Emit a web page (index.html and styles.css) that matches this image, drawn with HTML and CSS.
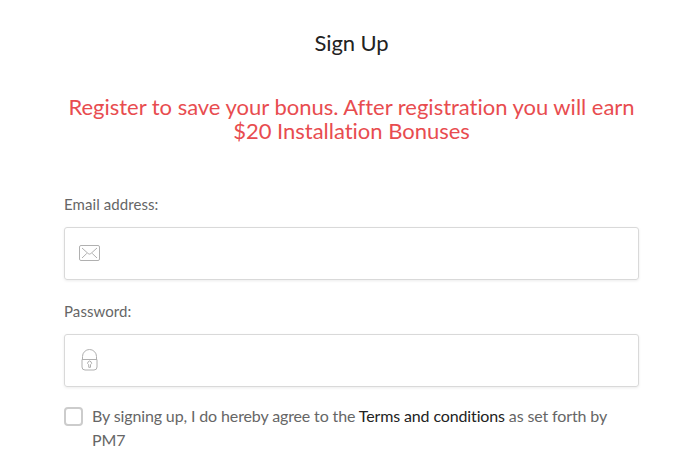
FILE: index.html
```html
<!DOCTYPE html>
<html lang="en">
<head>
    <meta charset="UTF-8">
    <meta name="viewport" content="width=device-width, initial-scale=1.0">
    <title>Sign Up</title>
    <link rel="stylesheet" href="styles.css">
</head>
<body>
<form class="signup">
    <h1 class="title">Sign Up</h1>
    <h2 class="bonus">Register to save your bonus. After registration you will earn $20 Installation Bonuses</h2>

    <div class="field">
        <label for="email">Email address:</label>
        <div class="input-box">
            <svg class="icon" width="22" height="22" viewBox="0 0 22 22">
                <rect x="0.5" y="3.5" width="20" height="15" rx="1.5"/>
                <path d="M3 6l6.2 5.6q1.3 1 2.6 0L18 6M3 16l4.8-4.6M18 16l-4.8-4.6"/>
            </svg>
            <input type="email" id="email">
        </div>
    </div>

    <div class="field">
        <label for="password">Password:</label>
        <div class="input-box">
            <svg class="icon" width="22" height="22" viewBox="0 0 22 22">
                <path d="M3.5 10.5V7.5a7 7 0 0 1 14 0v3"/>
                <path d="M3 10.5h15v7.5q0 3-3 3H6q-3 0-3-3z"/>
                <path d="M9.7 15.7a1.9 1.9 0 1 1 1.8 0v2.6H9.7z"/>
            </svg>
            <input type="password" id="password">
        </div>
    </div>

    <div class="terms">
        <input type="checkbox" id="agree" class="checkbox">
        <label for="agree">By signing up, I do hereby agree to the <a href="#">Terms and conditions</a> as set forth by PM7</label>
    </div>
</form>
</body>
</html>
```

FILE: styles.css
```css
body {
    font-family: Lato, sans-serif;
    font-size: 16px;
    font-variant-ligatures: none;
    line-height: 24px;
    margin: 0;
    background-color: #fff;
    color: #666;
}
.signup {
    width: 575px;
    margin-left: 64px;
    padding-top: 31px;
}
.title, .bonus {
    font-size: 22px;
    font-weight: 400;
    line-height: 24px;
    text-align: center;
    margin: 0;
}
.title {
    color: #222;
    letter-spacing: -0.1px;
}
.bonus {
    color: #e84c4f;
    letter-spacing: -0.02px;
    margin-top: 40px;
    margin-bottom: 49px;
}
.field {
    margin-bottom: 19px;
}
.field label {
    display: block;
    font-size: 15px;
    letter-spacing: 0.08px;
    margin-bottom: 11px;
}
.input-box {
    display: flex;
    align-items: center;
    box-sizing: border-box;
    height: 53px;
    padding: 0 14px;
    border: 1px solid #d9d9d9;
    border-radius: 3px;
    box-shadow: 0 1px 3px rgba(0, 0, 0, 0.08);
}
.input-box input {
    flex: 1;
    border: none;
    outline: none;
    background: none;
    margin-left: 12px;
    font: inherit;
}
.icon {
    fill: none;
    stroke: #b0b0b0;
    stroke-width: 1;
    margin-bottom: 2px;
}
.terms {
    display: flex;
    align-items: flex-start;
    letter-spacing: -0.13px;
    margin-top: -2px;
}
.checkbox {
    appearance: none;
    flex: none;
    box-sizing: border-box;
    width: 19px;
    height: 19px;
    margin: 3px 9px 0 0;
    border: 2px solid #ccc;
    border-radius: 4px;
}
.terms a {
    color: #222;
    text-decoration: none;
}
```
